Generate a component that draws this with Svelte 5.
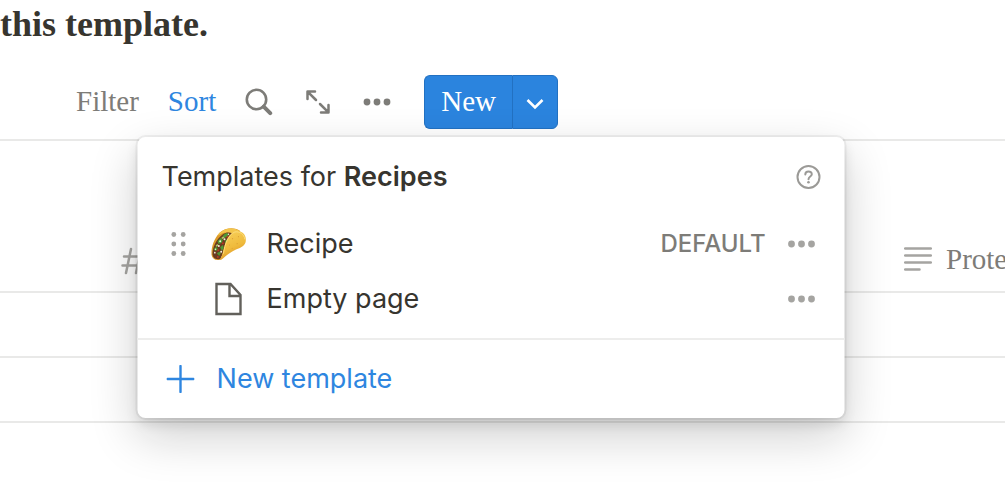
<script lang="ts">
  type Template = { name: string; icon: 'taco' | 'page'; isDefault: boolean };

  const collection: string = 'Recipes';

  const templates: Template[] = [
    { name: 'Recipe', icon: 'taco', isDefault: true },
    { name: 'Empty page', icon: 'page', isDefault: false },
  ];

  let menuOpen = $state(true);
</script>

{#snippet dots()}
  <svg class="dots" viewBox="0 0 28 8" aria-hidden="true">
    <circle cx="4" cy="4" r="3.4" />
    <circle cx="14" cy="4" r="3.4" />
    <circle cx="24" cy="4" r="3.4" />
  </svg>
{/snippet}

<main class="page">
  <h1 class="page__title">this template.</h1>

  <div class="toolbar">
    <button class="toolbar__text">Filter</button>
    <button class="toolbar__text toolbar__text--active">Sort</button>
    <button class="toolbar__icon" aria-label="Search">
      <svg class="icon-search" viewBox="0 0 28 28" aria-hidden="true">
        <circle cx="11.5" cy="11.5" r="9.7" />
        <path class="handle" d="M18.7 18.7 L25.2 25.2" />
      </svg>
    </button>
    <button class="toolbar__icon" aria-label="Expand">
      <svg class="icon-expand" viewBox="0 0 24 24" aria-hidden="true">
        <path d="M1.5 9 V1.5 H9 M1.8 1.8 L10 10 M14 14 L22.2 22.2 M22.5 15 V22.5 H15" />
      </svg>
    </button>
    <button class="toolbar__icon" aria-label="More">{@render dots()}</button>

    <div class="new">
      <button class="new__main">New</button>
      <button class="new__arrow" aria-label="Show templates" onclick={() => (menuOpen = !menuOpen)}>
        <svg viewBox="0 0 18 12" aria-hidden="true"><path d="M1.5 2 L9 9.5 L16.5 2" /></svg>
      </button>

      {#if menuOpen}
        <section class="menu">
          <header class="menu__header">
            <h2 class="menu__title">Templates for <b>{collection}</b></h2>
            <button class="menu__help" aria-label="Help">
              <svg viewBox="0 0 26 26" aria-hidden="true">
                <circle cx="13" cy="13" r="11" />
                <path d="M9.8 10.4 C9.8 6.5 16.3 6.5 16.3 10.2 C16.3 12.6 13 12.5 13 15.2" />
                <circle class="point" cx="13" cy="18.3" r="1.3" />
              </svg>
            </button>
          </header>

          <ul class="menu__list">
            {#each templates as template}
              <li class="item">
                <span class="item__drag">
                  {#if template.isDefault}
                    <svg viewBox="0 0 16 26" aria-hidden="true">
                      {#each [3.5, 13, 22.5] as y}
                        <circle cx="3.3" cy={y} r="2.4" />
                        <circle cx="12.7" cy={y} r="2.4" />
                      {/each}
                    </svg>
                  {/if}
                </span>
                <span class="item__icon">
                  {#if template.icon === 'taco'}
                    <svg class="taco" viewBox="0 0 108 108" aria-hidden="true">
                      <defs>
                        <linearGradient id="shell" x1="0.3" y1="0" x2="0.7" y2="1">
                          <stop offset="0" stop-color="#f7cf5a" />
                          <stop offset="0.55" stop-color="#efbb3c" />
                          <stop offset="1" stop-color="#d98a22" />
                        </linearGradient>
                      </defs>
                      <!-- back shell -->
                      <path fill="#dc9a2a" d="M3 86 C2 64 10 38 27 20 C46 3 76 3 90 16 L62 34 L28 101 C14 104 5 98 3 86Z" />
                      <path fill="#f3c64c" d="M20 30 C34 7 66 1 88 15 L62 22 C46 16 32 22 20 30Z" />
                      <!-- filling -->
                      <path fill="#6a3b20" d="M6 86 C6 66 16 40 38 24 C46 18 58 18 66 22 L46 58 L30 99 C18 102 8 97 6 86Z" />
                      <g fill="#4f9a35">
                        <path d="M21 46 l9 -10 l7 6 l-3 8 l-10 4z" />
                        <path d="M38 27 l10 -6 l8 4 l-6 8 l-10 2z" />
                        <path d="M9 70 l8 -8 l5 6 l-6 8z" />
                        <path d="M29 64 l8 -7 l3 9 l-6 9z" />
                        <path d="M19 82 l8 -5 l4 5 l-5 8z" />
                        <path d="M43 46 l6 -6 l3 5 l-6 7z" />
                      </g>
                      <g fill="#a9cf69">
                        <path d="M32 36 l6 -5 l4 4 l-6 4z" />
                        <path d="M15 60 l5 -6 l4 3 l-5 5z" />
                      </g>
                      <g fill="#b93a22">
                        <circle cx="51" cy="32" r="3" />
                        <circle cx="23" cy="73" r="3" />
                        <circle cx="37" cy="52" r="3" />
                        <circle cx="22" cy="93" r="3" />
                      </g>
                      <g fill="#f4eedf">
                        <circle cx="29" cy="46" r="3" />
                        <circle cx="42" cy="40" r="3" />
                        <circle cx="25" cy="60" r="3" />
                        <circle cx="13" cy="80" r="2.5" />
                        <circle cx="32" cy="77" r="3" />
                        <circle cx="54" cy="25" r="2.3" />
                        <circle cx="15" cy="70" r="2.2" />
                      </g>
                      <!-- front shell -->
                      <path fill="url(#shell)" d="M26 101 C37 92 36 78 41 66 C46 43 57 23 73 16 C93 11 107 26 106 42 C106 54 99 61 88 66 C69 73 51 84 39 96 C34 101 29 103 26 101Z" />
                      <path class="rim" d="M39 82 C43 52 54 26 73 18 C87 15 101 25 103 39" />
                      <g fill="#dda235">
                        <circle cx="66" cy="38" r="2" />
                        <circle cx="84" cy="32" r="1.8" />
                        <circle cx="57" cy="57" r="1.8" />
                        <circle cx="80" cy="53" r="2" />
                        <circle cx="65" cy="67" r="1.8" />
                      </g>
                    </svg>
                  {:else}
                    <svg class="sheet" viewBox="0 0 28 34" aria-hidden="true">
                      <path d="M2 2 H16 L26 13 V32 H2 Z M15 2 V14 H26" />
                    </svg>
                  {/if}
                </span>
                <a class="item__name" href="#{template.icon}">{template.name}</a>
                {#if template.isDefault}
                  <span class="item__badge">DEFAULT</span>
                {/if}
                <button class="item__more" aria-label="More options for {template.name}">{@render dots()}</button>
              </li>
            {/each}
          </ul>

          <button class="menu__new">
            <svg viewBox="0 0 28 28" aria-hidden="true"><path d="M14 1 V27 M1 14 H27" /></svg>
            New template
          </button>
        </section>
      {/if}
    </div>
  </div>

  <table class="table">
    <thead>
      <tr>
        <th class="table__number" aria-label="Number">
          <svg class="icon-hash" viewBox="0 0 26 28" aria-hidden="true">
            <path d="M10 2 L5 26 M20 2 L15 26 M3 9.5 H24 M1.5 18.5 H22.5" />
          </svg>
        </th>
        <th class="table__text">
          <span class="table__label">
            <svg class="icon-text" viewBox="0 0 28 26" aria-hidden="true">
              <path d="M1.2 2.5 H26.8 M1.2 9.5 H26.8 M1.2 16.5 H26.8 M1.2 23.5 H15.5" />
            </svg>
            Protein
          </span>
        </th>
      </tr>
    </thead>
    <tbody>
      <tr class="table__row"><td></td><td></td></tr>
      <tr class="table__row"><td></td><td></td></tr>
    </tbody>
  </table>
</main>

<style>
  :global(body) {
    margin: 0;
    background: #fff;
  }

  .page {
    min-height: 100vh;
    overflow: hidden;
    color: #37352f;
    font-family: "Liberation Serif", serif;
  }

  button {
    display: flex;
    align-items: center;
    margin: 0;
    padding: 0;
    border: 0;
    background: none;
    color: inherit;
    font: inherit;
    cursor: pointer;
  }

  svg {
    display: block;
    fill: none;
    stroke-linecap: round;
  }

  .page__title {
    margin: 0;
    padding: 4px 0 31px;
    font-size: 36px;
    line-height: 40px;
    font-weight: 700;
  }

  .toolbar {
    display: flex;
    align-items: center;
    gap: 29px;
    height: 54px;
    padding-left: 76px;
    color: #7d7c78;
    font-size: 29px;
    line-height: 32px;
  }

  .toolbar__text {
    padding-bottom: 2px;
  }

  .toolbar__text--active {
    color: #2e86e0;
  }

  .icon-search {
    width: 28px;
    height: 28px;
    stroke: currentColor;
    stroke-width: 2.6;
  }

  .icon-search .handle {
    stroke-width: 4;
  }

  .icon-expand {
    width: 24px;
    height: 24px;
    margin: 0 4px;
    stroke: currentColor;
    stroke-width: 2.5;
    stroke-linejoin: round;
  }

  .dots {
    width: 28px;
    height: 8px;
    fill: currentColor;
  }

  .new {
    position: relative;
    display: flex;
    margin-left: 4px;
    color: #fff;
  }

  .new__main,
  .new__arrow {
    justify-content: center;
    height: 54px;
    border: 1px solid #2271c2;
    background: #2b84de;
  }

  .new__main {
    padding: 0 16px 2px;
    border-right: 0;
    border-radius: 6px 0 0 6px;
  }

  .new__arrow {
    width: 46px;
    border-radius: 0 6px 6px 0;
  }

  .new__arrow svg {
    width: 18px;
    height: 12px;
    margin-top: 4px;
    stroke: #fff;
    stroke-width: 2.6;
    stroke-linecap: butt;
  }

  .menu {
    position: absolute;
    top: calc(100% + 8px);
    left: 50%;
    z-index: 1;
    width: 707px;
    transform: translateX(-50%);
    border-radius: 8px;
    background: #fff;
    box-shadow:
      0 0 0 2px rgba(15, 15, 15, 0.05),
      0 6px 12px rgba(15, 15, 15, 0.1),
      0 18px 48px rgba(15, 15, 15, 0.2);
    color: #37352f;
    font-family: Inter, sans-serif;
    font-size: 27px;
    line-height: 32px;
  }

  .menu__header {
    display: flex;
    align-items: center;
    justify-content: space-between;
    padding: 24px 23px 23px 24px;
  }

  .menu__title {
    margin: 0;
    font-size: 27px;
    font-weight: 400;
  }

  .menu__title b {
    font-weight: 600;
  }

  .menu__help svg {
    width: 26px;
    height: 26px;
    stroke: #9b9a97;
    stroke-width: 2;
  }

  .menu__help .point {
    fill: #9b9a97;
    stroke: none;
  }

  .menu__list {
    margin: 0;
    padding: 0 0 12px;
    border-bottom: 2px solid #ededec;
    list-style: none;
  }

  .item {
    display: flex;
    align-items: center;
    height: 55px;
    padding: 0 29px 0 33px;
  }

  .item__drag {
    width: 40px;
  }

  .item__drag svg {
    width: 16px;
    height: 26px;
    fill: #a5a4a1;
  }

  .item__icon {
    display: flex;
    justify-content: center;
    width: 36px;
    margin-right: 20px;
  }

  .taco {
    width: 36px;
    height: 36px;
  }

  .taco .rim {
    stroke: #fbdc7c;
    stroke-width: 3;
  }

  .sheet {
    width: 28px;
    height: 34px;
    stroke: #62605b;
    stroke-width: 2.4;
    stroke-linecap: butt;
  }

  .item__name {
    flex: 1;
    color: inherit;
    text-decoration: none;
  }

  .item__badge {
    margin-right: 22px;
    color: #7d7c78;
    font-size: 24px;
    font-weight: 500;
  }

  .item__more {
    color: #a5a4a1;
  }

  .menu__new {
    gap: 22px;
    width: 100%;
    padding: 23px 29px;
    color: #2e86e0;
  }

  .menu__new svg {
    width: 28px;
    height: 28px;
    stroke: currentColor;
    stroke-width: 2.4;
  }

  .table {
    width: calc(100% + 100px);
    margin-top: 10px;
    border-collapse: collapse;
    border-top: 2px solid #e9e9e8;
    table-layout: fixed;
  }

  .table th {
    height: 134px;
    padding: 0 0 16px;
    border-bottom: 2px solid #e9e9e8;
    color: #7d7c78;
    font-size: 29px;
    line-height: 32px;
    font-weight: 400;
    text-align: left;
    vertical-align: bottom;
  }

  .table .table__number {
    width: 783px;
    padding-left: 121px;
  }

  .table__label {
    display: flex;
    align-items: center;
    gap: 14px;
  }

  .icon-hash {
    width: 26px;
    height: 28px;
    stroke: #a5a4a1;
    stroke-width: 2.5;
  }

  .icon-text {
    width: 28px;
    height: 26px;
    stroke: #a5a4a1;
    stroke-width: 2.5;
  }

  .table__row td {
    height: 63px;
    padding: 0;
    border-bottom: 2px solid #e9e9e8;
  }
</style>
